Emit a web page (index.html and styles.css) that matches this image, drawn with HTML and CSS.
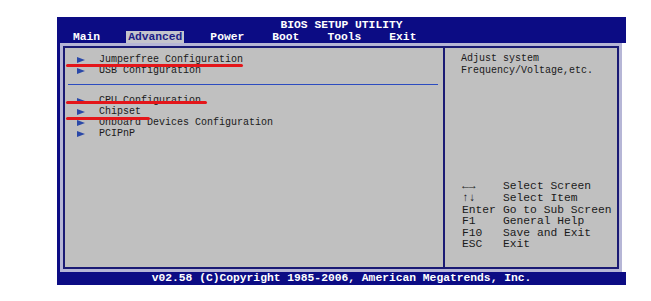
FILE: index.html
```html
<!DOCTYPE html>
<html lang="en">
<head>
    <meta charset="UTF-8">
    <title>BIOS Setup Utility</title>
    <link rel="stylesheet" href="styles.css">
</head>
<body>
    <div class="bios">
        <div class="header">
            <div class="title">BIOS SETUP UTILITY</div>
            <div class="tabs">
                <span class="tab">Main</span>
                <span class="tab active">Advanced</span>
                <span class="tab">Power</span>
                <span class="tab">Boot</span>
                <span class="tab">Tools</span>
                <span class="tab">Exit</span>
            </div>
        </div>

        <div class="main">
            <div class="panel">
                <div class="panel-inner">
                    <div class="menu">
                        <div class="item"><span class="arrow"></span>Jumperfree Configuration</div>
                        <div class="item"><span class="arrow"></span>USB Configuration</div>
                        <div class="separator"></div>
                        <div class="item"><span class="arrow"></span>CPU Configuration</div>
                        <div class="item"><span class="arrow"></span>Chipset</div>
                        <div class="item"><span class="arrow"></span>Onboard Devices Configuration</div>
                        <div class="item"><span class="arrow"></span>PCIPnP</div>

                        <!-- red marks drawn over the menu -->
                        <span class="mark mark-jumper"></span>
                        <span class="mark mark-cpu"></span>
                        <span class="mark mark-chipset"></span>
                    </div>
                    <div class="help">
                        <div class="help-text">Adjust system<br>Frequency/Voltage,etc.</div>
                        <div class="legend">
                            <span class="key">&larr;&rarr;</span><span>Select Screen</span>
                            <span class="key">&uarr;&darr;</span><span>Select Item</span>
                            <span class="key">Enter</span><span>Go to Sub Screen</span>
                            <span class="key">F1</span><span>General Help</span>
                            <span class="key">F10</span><span>Save and Exit</span>
                            <span class="key">ESC</span><span>Exit</span>
                        </div>
                    </div>
                </div>
            </div>
        </div>

        <div class="footer">v02.58 (C)Copyright 1985-2006, American Megatrends, Inc.</div>
    </div>
</body>
</html>
```

FILE: styles.css
```css
body {
    margin: 0;
    background-color: #ffffff;
    font-family: "Liberation Mono", "Courier New", monospace;
}
.bios {
    width: 569px;
    margin-left: 57px;
    padding-top: 17px;
}
.header {
    background-color: #0c0c84;
    color: #ffffff;
    font-weight: bold;
    font-size: 11.3px;
    height: 26px;
}
.title {
    text-align: center;
    line-height: 11px;
    padding-top: 3px;
    height: 11px;
}
.tabs {
    display: flex;
    gap: 24px;
    padding-left: 14px;
    line-height: 12px;
}
.tab {
    padding: 0 2px;
}
.tab.active {
    background-color: #c4c4cc;
    color: #1c1c88;
}
.main {
    border-left: 3px solid #0c0c84;
    width: 562px;
}
.panel {
    border: 3px solid #b6b6d6;
    height: 223px;
}
.panel-inner {
    border: 2px solid #1a1a74;
    background-color: #c0c0c0;
    height: 219px;
    display: flex;
}
.menu {
    position: relative;
    width: 378px;
    border-right: 2px solid #1a1a74;
    padding-top: 6px;
    font-size: 10px;
    color: #1a1a1a;
}
.item {
    display: flex;
    align-items: center;
    line-height: 11px;
    padding-left: 12px;
}
.arrow {
    width: 0;
    height: 0;
    border-top: 3.5px solid transparent;
    border-bottom: 3.5px solid transparent;
    border-left: 8px solid #2a48a8;
    margin-right: 14px;
}
.separator {
    height: 1px;
    background-color: #2c4cc0;
    margin: 8px 5px 10px 3px;
}
.mark {
    position: absolute;
    left: 1px;
    height: 3px;
    border-radius: 2px;
    background-color: #e4161a;
}
.mark-jumper {
    top: 16px;
    width: 177px;
}
.mark-cpu {
    top: 53px;
    width: 141px;
}
.mark-chipset {
    top: 69px;
    width: 84px;
}
.help {
    flex: 1;
    display: flex;
    flex-direction: column;
    justify-content: space-between;
    padding: 5px 0 16px 16px;
    color: #1a1a1a;
}
.help-text {
    font-size: 10px;
    line-height: 12px;
}
.legend {
    display: grid;
    grid-template-columns: 41px auto;
    font-size: 11.3px;
    line-height: 11.6px;
    padding-left: 1px;
}
.footer {
    background-color: #0c0c84;
    color: #ffffff;
    font-weight: bold;
    font-size: 11.3px;
    line-height: 13px;
    text-align: center;
}
```
